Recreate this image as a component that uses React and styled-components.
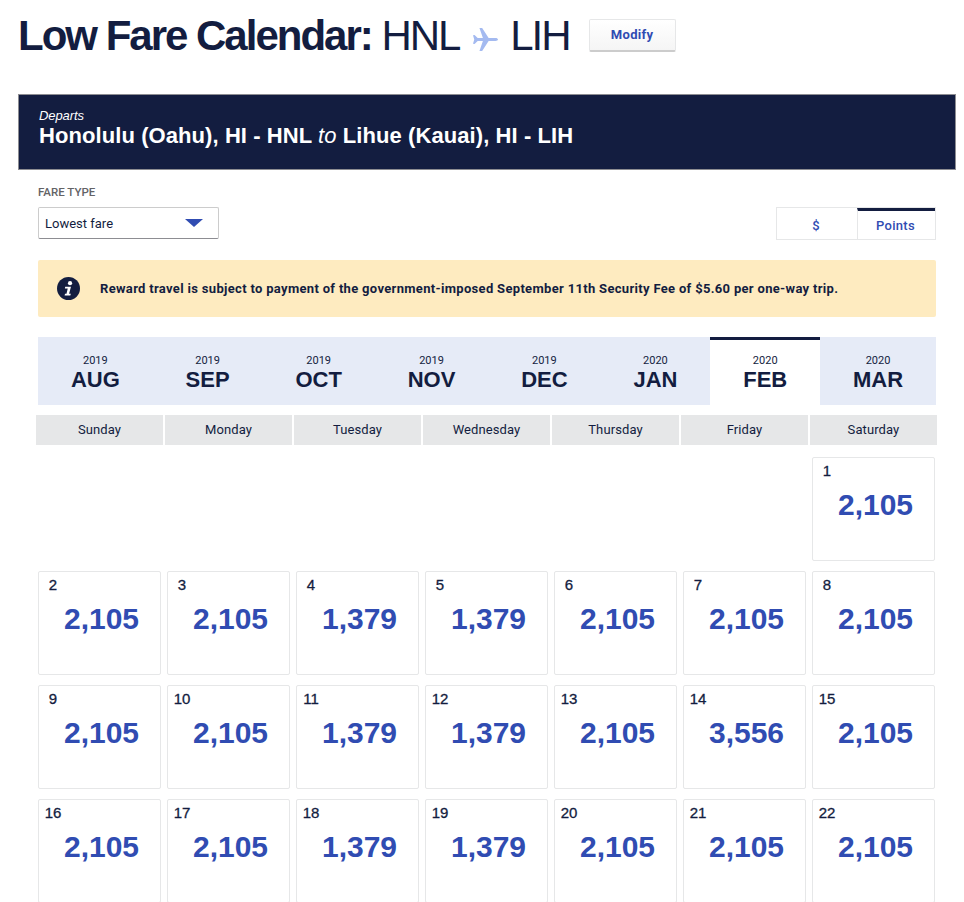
import React from 'react'
import styled, { createGlobalStyle } from 'styled-components'

const navy = '#131d40'
const blue = '#304cb2'

const months = [
    ['2019', 'AUG'], ['2019', 'SEP'], ['2019', 'OCT'], ['2019', 'NOV'],
    ['2019', 'DEC'], ['2020', 'JAN'], ['2020', 'FEB'], ['2020', 'MAR'],
]
const weekdays = ['Sunday', 'Monday', 'Tuesday', 'Wednesday', 'Thursday', 'Friday', 'Saturday']
const weeks = [
    [null, null, null, null, null, null, [1, '2,105']],
    [[2, '2,105'], [3, '2,105'], [4, '1,379'], [5, '1,379'], [6, '2,105'], [7, '2,105'], [8, '2,105']],
    [[9, '2,105'], [10, '2,105'], [11, '1,379'], [12, '1,379'], [13, '2,105'], [14, '3,556'], [15, '2,105']],
    [[16, '2,105'], [17, '2,105'], [18, '1,379'], [19, '1,379'], [20, '2,105'], [21, '2,105'], [22, '2,105']],
]

const App = () => {
    return (
        <Page>
            <GlobalStyle />
            <TitleRow>
                <Title><strong>Low Fare Calendar:</strong> HNL <PlaneIcon /> LIH</Title>
                <ModifyButton>Modify</ModifyButton>
            </TitleRow>
            <RouteBand>
                <Departs>Departs</Departs>
                <Route>Honolulu (Oahu), HI - HNL <em>to</em> Lihue (Kauai), HI - LIH</Route>
            </RouteBand>
            <Content>
                <Controls>
                    <FareType>
                        <FareLabel>FARE TYPE</FareLabel>
                        <FareSelect>
                            Lowest fare
                            <Caret />
                        </FareSelect>
                    </FareType>
                    <Toggle>
                        <ToggleItem>$</ToggleItem>
                        <ToggleItem $active>Points</ToggleItem>
                    </Toggle>
                </Controls>
                <Notice>
                    <InfoIcon />
                    <span>Reward travel is subject to payment of the government-imposed September 11th Security Fee of $5.60 per one-way trip.</span>
                </Notice>
                <MonthBar>
                    {months.map(([year, month]) => (
                        <MonthTab key={month} $active={month === 'FEB'}>
                            <Year>{year}</Year>
                            <Month>{month}</Month>
                        </MonthTab>
                    ))}
                </MonthBar>
                <WeekHeader>
                    {weekdays.map(day => <WeekDay key={day}>{day}</WeekDay>)}
                </WeekHeader>
                <Days>
                    {weeks.flat().map((cell, i) => cell
                        ? (
                            <DayCell key={i}>
                                <DayNum>{cell[0]}</DayNum>
                                <Price>{cell[1]}</Price>
                            </DayCell>
                        )
                        : <EmptyCell key={i} />
                    )}
                </Days>
            </Content>
        </Page>
    )
}

const PlaneIcon = () => (
    <PlaneSvg viewBox="0 0 24 24">
        <path d="M0 8 1.5 7.6 4.5 10.6H9.5L6.2 1H8.8L15 10.6H21.5C23 10.6 24 11.2 24 12S23 13.4 21.5 13.4H15L8.8 23H6.2L9.5 13.4H4.5L1.5 16.4 0 16 1.2 12Z" />
    </PlaneSvg>
)

const InfoIcon = () => (
    <InfoSvg viewBox="0 0 24 24">
        <circle cx="12" cy="12" r="12" fill={navy} />
        <circle cx="13.6" cy="6.4" r="2.2" fill="#fff" />
        <path d="M8.6 10.2h6l-2 7.2h1.8l-.5 1.8H7.9l.5-1.8h1.5l1.3-5.4H8.2z" fill="#fff" />
    </InfoSvg>
)

export default App

const GlobalStyle = createGlobalStyle`
    html, body {
        margin: 0;
        height: 902px;
        overflow: hidden;
        background: #fff;
    }
    body {
        font-family: "Liberation Sans", Arial, sans-serif;
        color: ${navy};
    }
`

const Page = styled.div`
    padding: 0 8px 0 18px;
`

const TitleRow = styled.div`
    display: flex;
    align-items: center;
    height: 94px;
    padding-bottom: 22px;
    box-sizing: border-box;
`

const Title = styled.h1`
    margin: 0;
    font-size: 42px;
    line-height: 70px;
    font-weight: 400;
    letter-spacing: -2px;
    color: ${navy};
    white-space: nowrap;
    strong { font-weight: 700; }
`

const PlaneSvg = styled.svg`
    width: 25px;
    height: 25px;
    fill: #a4baf0;
    margin: 0 3px 0 5px;
    vertical-align: -2px;
`

const ModifyButton = styled.button`
    width: 87px;
    height: 33px;
    margin: 0 0 2px 19px;
    padding: 0;
    font-family: "Roboto", sans-serif;
    font-size: 13px;
    font-weight: 700;
    letter-spacing: 0.3px;
    color: ${blue};
    background: linear-gradient(#fff, #f5f5f5);
    border: 1px solid #e6e7e8;
    border-bottom: 2px solid #ccc;
    border-radius: 2px;
`

const RouteBand = styled.div`
    height: 76px;
    box-sizing: border-box;
    padding: 13px 20px 0;
    background: ${navy};
    border: 1px solid #8d8d92;
    color: #fff;
`

const Departs = styled.div`
    font-size: 13px;
    line-height: 15px;
    font-style: italic;
    letter-spacing: -0.1px;
`

const Route = styled.div`
    font-size: 22px;
    line-height: 25px;
    font-weight: 700;
    letter-spacing: 0.08px;
    em { font-weight: 400; }
`

const Content = styled.div`
    padding: 0 20px;
`

const Controls = styled.div`
    display: flex;
    justify-content: space-between;
    align-items: flex-end;
    height: 90px;
    padding-bottom: 20px;
    box-sizing: border-box;
`

const FareType = styled.div`
    margin-bottom: 1px;
`

const FareLabel = styled.div`
    font-family: "Roboto", sans-serif;
    font-size: 11.5px;
    line-height: 14px;
    font-weight: 500;
    color: #636366;
    margin-bottom: 8px;
`

const FareSelect = styled.div`
    display: flex;
    align-items: center;
    justify-content: space-between;
    width: 181px;
    height: 32px;
    box-sizing: border-box;
    padding: 0 15px 0 6px;
    font-family: "Roboto", sans-serif;
    font-size: 13px;
    color: ${navy};
    border: 1px solid #ccc;
    border-bottom-color: #8d8d92;
    border-radius: 2px;
`

const Caret = styled.span`
    width: 0;
    height: 0;
    border-left: 9px solid transparent;
    border-right: 9px solid transparent;
    border-top: 8px solid ${blue};
`

const Toggle = styled.div`
    display: flex;
    height: 33px;
    border: 1px solid #e6e7e8;
    box-sizing: border-box;
`

const ToggleItem = styled.div`
    width: ${p => (p.$active ? '78px' : '80px')};
    display: flex;
    align-items: center;
    justify-content: center;
    box-sizing: border-box;
    font-family: "Roboto", sans-serif;
    font-size: 13px;
    font-weight: 500;
    letter-spacing: 0.3px;
    padding-right: 2px;
    color: ${blue};
    border-top: 3px solid ${p => (p.$active ? navy : 'transparent')};
    border-left: ${p => (p.$active ? '1px solid #e6e7e8' : '0')};
`

const Notice = styled.div`
    display: flex;
    align-items: center;
    gap: 20px;
    height: 57px;
    padding-left: 19px;
    font-family: "Roboto", sans-serif;
    font-size: 13px;
    font-weight: 700;
    letter-spacing: 0.32px;
    color: ${navy};
    background: #feebc0;
    border-radius: 2px;
`

const InfoSvg = styled.svg`
    width: 23px;
    height: 23px;
    flex: none;
`

const MonthBar = styled.div`
    display: flex;
    height: 68px;
    margin-top: 20px;
    background: #e6ebf7;
`

const MonthTab = styled.div`
    flex: 1 1 auto;
    display: flex;
    flex-direction: column;
    align-items: center;
    box-sizing: border-box;
    padding-top: 14px;
    background: ${p => (p.$active ? '#fff' : 'transparent')};
    border-top: 3px solid ${p => (p.$active ? navy : 'transparent')};
`

const Year = styled.div`
    font-family: "Roboto", sans-serif;
    font-size: 11px;
    line-height: 13px;
`

const Month = styled.div`
    font-size: 22px;
    line-height: 25px;
    font-weight: 700;
`

const WeekHeader = styled.div`
    display: grid;
    grid-template-columns: repeat(7, 127px);
    gap: 2px;
    margin: 10px 0 12px -2px;
`

const WeekDay = styled.div`
    height: 30px;
    box-sizing: border-box;
    padding-bottom: 2px;
    display: flex;
    align-items: center;
    justify-content: center;
    font-family: "Roboto", sans-serif;
    font-size: 13px;
    letter-spacing: 0.1px;
    color: ${navy};
    background: #e6e7e8;
`

const Days = styled.div`
    display: grid;
    grid-template-columns: repeat(7, 123px);
    grid-auto-rows: 104px;
    gap: 10px 6px;
`

const DayCell = styled.div`
    box-sizing: border-box;
    border: 1px solid #e6e7e8;
    border-radius: 2px;
    padding: 4px 0 0 4px;
`

const EmptyCell = styled.div``

const DayNum = styled.div`
    width: 20px;
    font-size: 15px;
    line-height: 17px;
    font-weight: 400;
    -webkit-text-stroke: 0.3px ${navy};
    text-align: center;
    color: ${navy};
`

const Price = styled.div`
    margin: 9px 0 0;
    font-size: 30px;
    line-height: 34px;
    font-weight: 700;
    color: ${blue};
    text-align: center;
`
